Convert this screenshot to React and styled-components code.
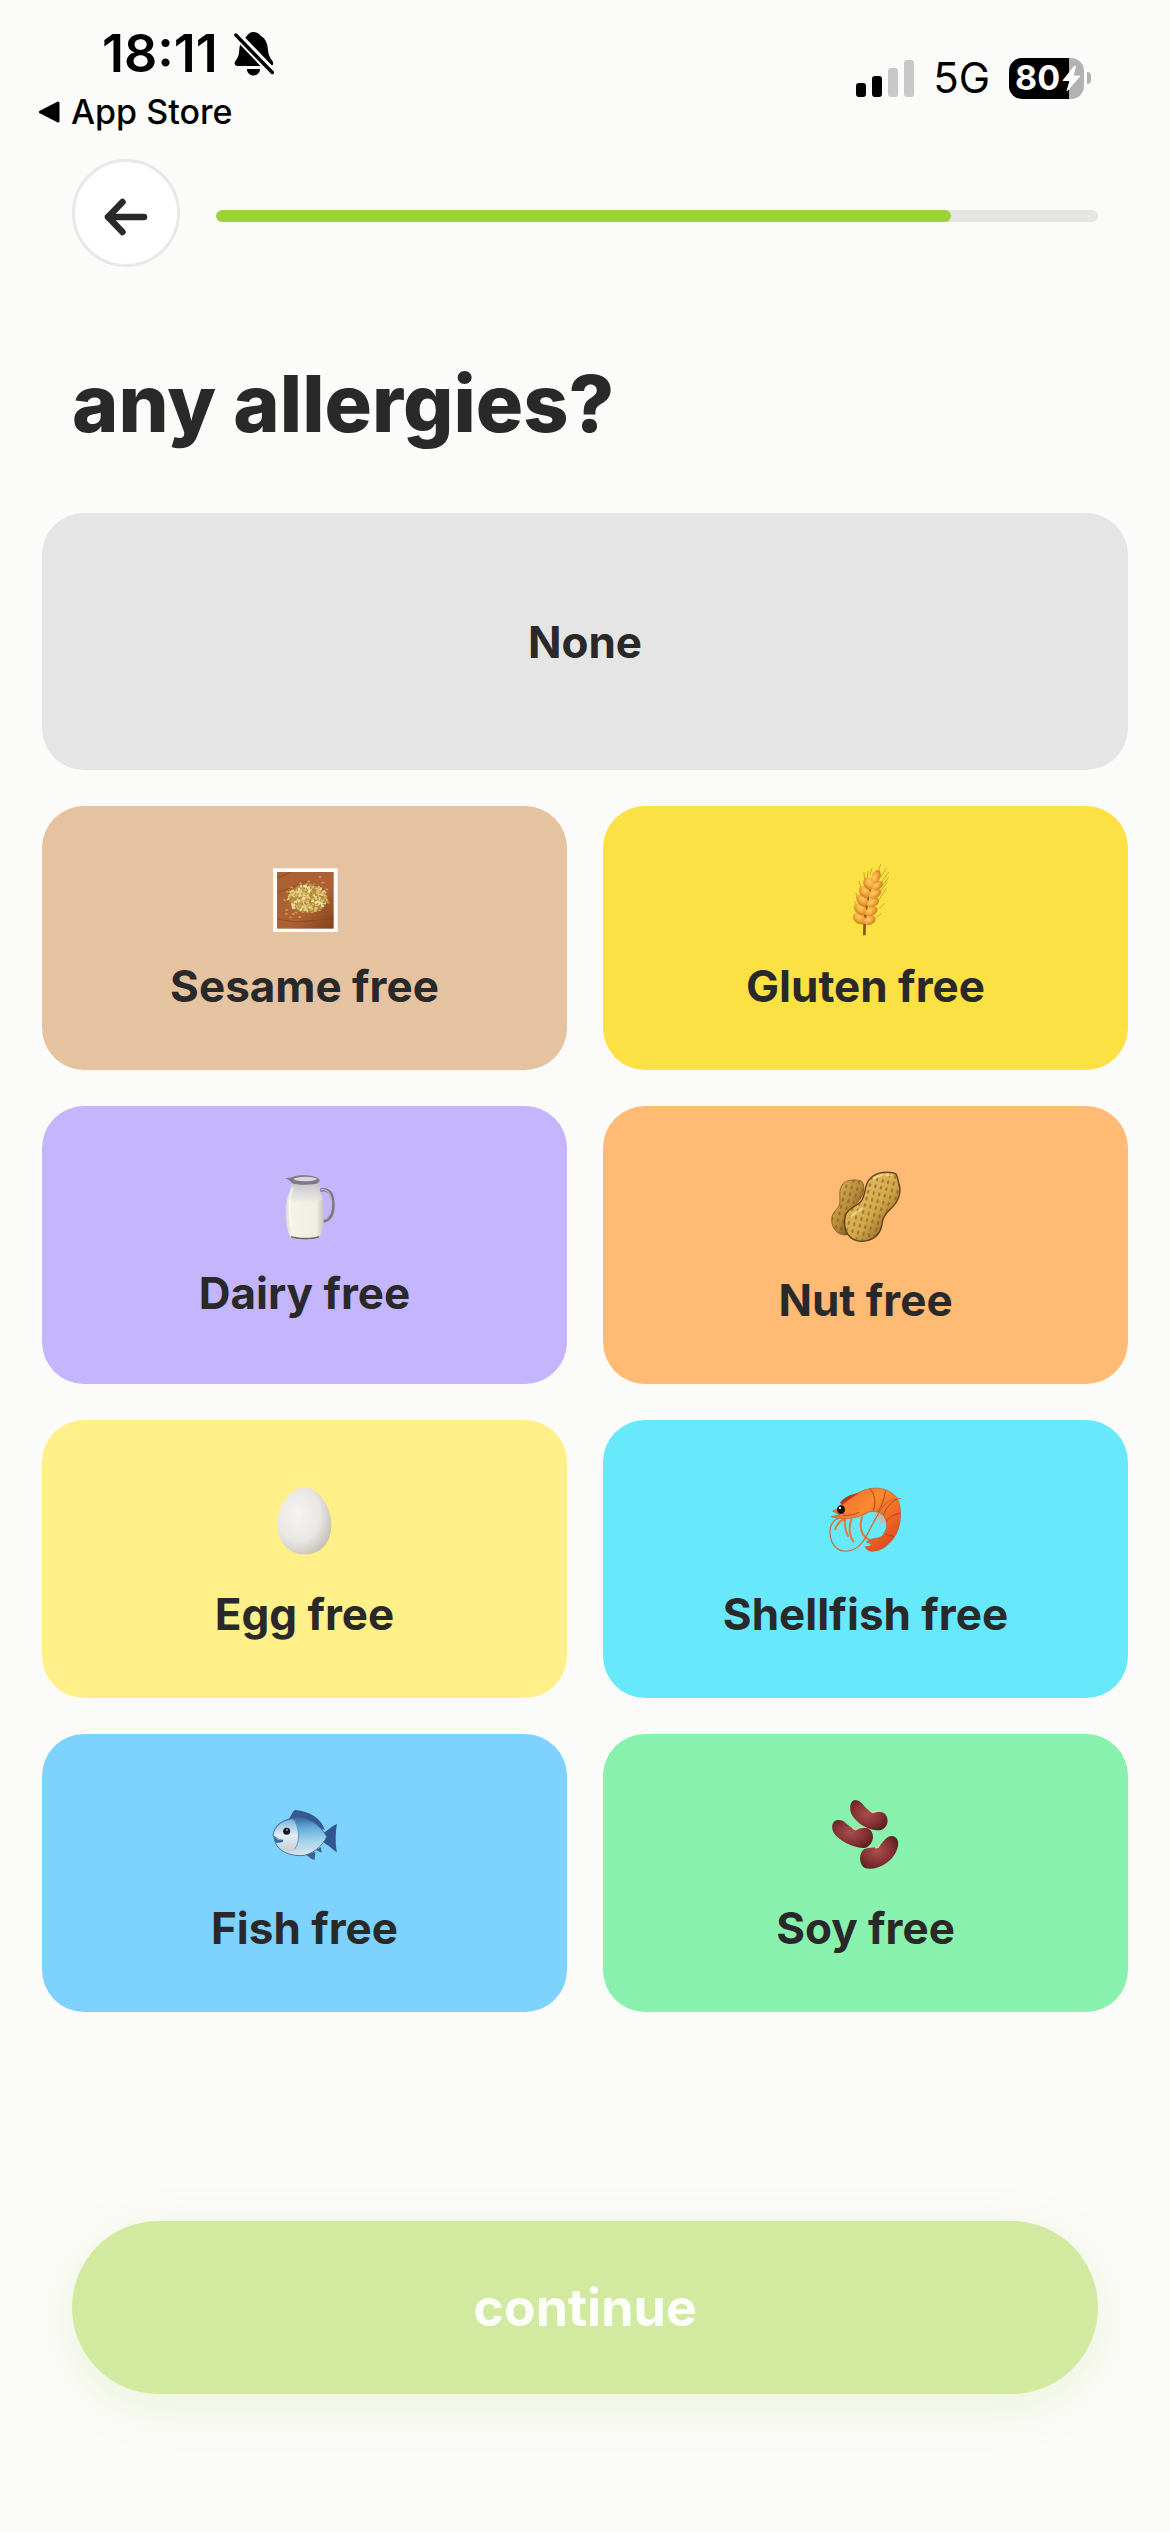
import React, { useState } from 'react';
import styled, { createGlobalStyle } from 'styled-components';

const GlobalStyle = createGlobalStyle`
  * {
    box-sizing: border-box;
  }
  body {
    margin: 0;
    background: #fbfbf9;
    color: #292929;
    font-family: Inter, 'Liberation Sans', sans-serif;
  }
  button {
    font-family: inherit;
    color: inherit;
    border: none;
    padding: 0;
    cursor: pointer;
  }
`;

const Page = styled.div`
  display: flex;
  flex-direction: column;
  min-height: 100vh;
`;

const StatusBar = styled.div`
  display: flex;
  align-items: center;
  justify-content: space-between;
  padding: 24px 79px 0 38px;
  color: #000;
`;

const ClockRow = styled.div`
  display: flex;
  align-items: center;
  gap: 16px;
  padding-left: 64px;
  font-size: 52px;
  line-height: 60px;
  font-weight: 600;
`;

const StoreLink = styled.a`
  display: flex;
  align-items: center;
  gap: 10px;
  margin-top: 8px;
  color: inherit;
  text-decoration: none;
  font-size: 34px;
  line-height: 40px;
  font-weight: 500;
`;

const Indicators = styled.div`
  display: flex;
  align-items: center;
  gap: 19px;
  font-size: 42px;
  line-height: 48px;
`;

const SignalBars = styled.div`
  display: flex;
  align-items: flex-end;
  gap: 6px;
`;

const SignalBar = styled.span`
  width: 10px;
  height: ${(props) => props.$height}px;
  border-radius: 3px;
  background: ${(props) => (props.$on ? '#000' : '#c8c8c8')};
`;

const Battery = styled.div`
  display: flex;
  align-items: center;
  gap: 3px;
`;

const BatteryBody = styled.div`
  display: flex;
  align-items: center;
  gap: 2px;
  width: 75px;
  height: 41px;
  padding-left: 6px;
  border-radius: 13px;
  background: linear-gradient(to right, #000 80%, #b2b2b2 80%);
  color: #fff;
  font-size: 34px;
  font-weight: 700;
`;

const BatteryTip = styled.span`
  width: 4px;
  height: 12px;
  border-radius: 0 4px 4px 0;
  background: #b2b2b2;
`;

const Header = styled.header`
  display: flex;
  align-items: center;
  gap: 36px;
  min-height: 114px;
  margin-top: 27px;
  padding: 0 72px;
`;

const BackButton = styled.button`
  display: flex;
  align-items: center;
  justify-content: center;
  align-self: flex-start;
  flex: none;
  width: 108px;
  height: 108px;
  && {
    padding-top: 8px;
    border: 3px solid #e8e8e7;
  }
  border-radius: 50%;
  background: #fff;
`;

const Track = styled.div`
  flex: 1;
  height: 12px;
  border-radius: 6px;
  background: #e5e5e4;
  overflow: hidden;
`;

const TrackFill = styled.div`
  height: 100%;
  border-radius: 6px;
  background: #9bd235;
`;

const Title = styled.h1`
  margin: 82px 72px 62px;
  font-size: 79px;
  line-height: 96px;
  font-weight: 800;
`;

const Options = styled.div`
  display: grid;
  grid-template-columns: 1fr 1fr;
  gap: 36px;
  padding: 0 42px;
`;

const OptionCard = styled.button`
  display: flex;
  flex-direction: column;
  align-items: center;
  justify-content: center;
  gap: 23px;
  grid-column: ${(props) => (props.$wide ? '1 / -1' : 'auto')};
  border-radius: 42px;
  background: ${(props) => props.$color};
  font-size: 44px;
  line-height: 54px;
  font-weight: 700;
  && {
    padding: ${(props) => (props.$wide ? '102px 0 101px' : '58px 0 57px')};
  }
  svg {
    display: block;
  }
`;

const Footer = styled.footer`
  margin-top: auto;
  padding: 72px 72px 138px;
`;

const ContinueButton = styled.button`
  display: block;
  width: 100%;
  height: 173px;
  border-radius: 87px;
  background: #d2e9a0;
  box-shadow: 0 12px 48px rgba(155, 210, 53, 0.16);
  && {
    color: #fcfef9;
  }
  font-size: 52px;
  line-height: 64px;
  font-weight: 700;
`;

const BellOff = () => (
  <svg width="40" height="44" viewBox="0 0 40 44" aria-hidden="true">
    <path
      d="M12 5C14 2 16 0 19.500 0S25 2 27 4C32 7 33.500 12 34 18C34.400 23 36 26 38.500 29C40 32 39 34 36 34H4C1 34 0 32 1 29.500C4 26 5 23 5.300 18C5.600 12 8 7 12 5Z"
      fill="#000"
    />
    <path d="M13 37H26C26 41 23 43.500 19.500 43.500S13 41 13 37Z" fill="#000" />
    <path d="M0 0L40 42" stroke="#fbfbf9" strokeWidth="8.500" />
    <path d="M1.800 3L38.300 40.500" stroke="#000" strokeWidth="3.400" strokeLinecap="round" />
  </svg>
);

const Bolt = () => (
  <svg width="19" height="27" viewBox="0 0 19 27" aria-hidden="true">
    <path d="M12.500 1L1 15.500H8L5 26L18 11H11L13.500 1.500Z" fill="#fff" stroke="#fff" strokeLinejoin="round" />
  </svg>
);

// uneven steps keep the heap of seeds from showing a spiral
const seeds = Array.from({ length: 260 }, (_, i) => {
  const angle = i * 2.4 + Math.sin(i * 12.9) * 0.5;
  const r = Math.sqrt(i / 260) + Math.sin(i * 7.3) * 0.05;
  return {
    x: 201 + Math.cos(angle) * r * 58,
    y: 174 + Math.sin(angle) * r * 41,
    turn: (i * 47) % 180,
    fill: ['#e6cf85', '#c9a04c', '#f3e3a8', '#b28a3e', '#dcbb66'][i % 5],
  };
});

const strays = [
  [140, 156], [152, 142], [180, 130], [204, 124], [238, 111], [246, 128],
  [259, 148], [132, 180], [138, 210], [137, 222], [150, 232], [166, 218],
  [177, 231], [186, 216], [214, 217], [236, 211], [262, 187], [158, 222],
];

const Sesame = () => (
  <svg width="72" height="72" viewBox="85 72 216 216" aria-hidden="true">
    <defs>
      <linearGradient id="wood" x1="0" y1="0" x2="1" y2="1">
        <stop offset="0" stopColor="#a96232" />
        <stop offset="0.6" stopColor="#ae6034" />
        <stop offset="1" stopColor="#84401d" />
      </linearGradient>
    </defs>
    <rect x="97" y="85" width="194" height="191" fill="#fff" />
    <rect x="109" y="96" width="170" height="170" fill="url(#wood)" />
    <path d="M109 114L150 97M109 160L200 122M109 238L170 246L278 236" stroke="#85431f" strokeWidth="2" fill="none" />
    <ellipse cx="202" cy="177" rx="58" ry="42" fill="#a67c36" />
    {seeds.map((s, i) => (
      <ellipse key={i} cx={s.x} cy={s.y} rx="5" ry="3" fill={s.fill} transform={`rotate(${s.turn} ${s.x} ${s.y})`} />
    ))}
    {strays.map(([x, y]) => (
      <ellipse key={`${x}-${y}`} cx={x} cy={y} rx="5.500" ry="3.500" fill="#d79a55" stroke="#87501f" />
    ))}
  </svg>
);

const grains = [
  [176, 236, 22, 15, 35], [207, 241, 19, 13, -25],
  [179, 208, 22, 15, 42], [212, 214, 20, 13, -28],
  [185, 181, 21, 15, 48], [217, 187, 20, 13, -30],
  [192, 156, 20, 15, 52], [223, 161, 20, 13, -30],
  [204, 131, 20, 15, 62], [230, 136, 18, 12, -32],
  [226, 110, 21, 13, -68],
];

const Wheat = () => (
  <svg width="72" height="72" viewBox="88 72 216 216" aria-hidden="true">
    <defs>
      <radialGradient id="grain" cx="0.4" cy="0.35" r="0.8">
        <stop offset="0" stopColor="#ffcf68" />
        <stop offset="0.5" stopColor="#f0a236" />
        <stop offset="1" stopColor="#bd681a" />
      </radialGradient>
    </defs>
    <path d="M191 286C190 240 196 190 214 120" stroke="#8a5312" strokeWidth="8" fill="none" />
    <path
      d="M233 96L240 72M240 112L258 84M240 130L264 96M238 146L264 112M236 160L260 124M236 178L256 146M236 205L252 190M228 232L242 220M192 124L190 98M200 112L202 92M208 106L214 84M182 148L175 122M170 180L166 158M165 208L163 184"
      stroke="#b98722"
      strokeWidth="2"
      fill="none"
    />
    {grains.map(([x, y, rx, ry, turn]) => (
      <ellipse key={`${x}-${y}`} cx={x} cy={y} rx={rx} ry={ry} fill="url(#grain)" transform={`rotate(${turn} ${x} ${y})`} />
    ))}
  </svg>
);

const Milk = () => (
  <svg width="72" height="72" viewBox="85 63 216 216" aria-hidden="true">
    <defs>
      <linearGradient id="glass" x1="0" y1="0" x2="1" y2="0">
        <stop offset="0" stopColor="#d9d8cf" />
        <stop offset="0.15" stopColor="#f4f3e8" />
        <stop offset="0.8" stopColor="#efeee3" />
        <stop offset="1" stopColor="#c4c2ba" />
      </linearGradient>
      <linearGradient id="neck" x1="0" y1="0" x2="0" y2="1">
        <stop offset="0" stopColor="#b3b1c0" />
        <stop offset="1" stopColor="#eeedeb" />
      </linearGradient>
    </defs>
    <path d="M236 122C262 112 276 130 277 160C278 190 270 208 251 213" fill="none" stroke="#7b7885" strokeWidth="10" strokeLinecap="round" />
    <path d="M240 120C260 114 272 132 273 160C274 186 266 202 252 209" fill="none" stroke="#b9b6c4" strokeWidth="4" />
    <path d="M152 98C152 122 135 140 135 182C135 218 140 246 150 262C164 272 222 272 237 262C246 244 251 216 250 180C249 144 235 124 236 98Z" fill="url(#glass)" />
    <path d="M152 96C152 118 142 132 138 152C170 162 224 158 246 148C242 132 235 118 236 96Z" fill="url(#neck)" opacity="0.7" />
    <path d="M151 262C164 271 222 271 236 262L235 257C220 265 168 265 152 257Z" fill="#6a6669" />
    <path d="M133 84C143 84 150 83 158 80C180 72 226 76 236 88C238 97 232 102 218 103C190 106 160 104 153 98C148 92 142 88 133 84Z" fill="#7d7a85" />
    <path d="M157 87C176 78 216 79 230 87C218 95 172 97 157 87Z" fill="#d7d5e0" />
    <path d="M156 114C145 140 145 188 151 228" stroke="#fff" strokeWidth="6" opacity="0.6" fill="none" strokeLinecap="round" />
  </svg>
);

const Peanuts = () => (
  <svg width="86" height="86" viewBox="67 42 258 258" aria-hidden="true">
    <defs>
      <linearGradient id="shell" x1="0" y1="0" x2="1" y2="1">
        <stop offset="0" stopColor="#ecca6e" />
        <stop offset="0.55" stopColor="#d3a84b" />
        <stop offset="1" stopColor="#6b4416" />
      </linearGradient>
      <linearGradient id="shellBack" x1="0" y1="0" x2="1" y2="1">
        <stop offset="0" stopColor="#dcb860" />
        <stop offset="0.5" stopColor="#b98b3a" />
        <stop offset="1" stopColor="#4a2d0e" />
      </linearGradient>
      <pattern id="pits" width="17" height="21" patternUnits="userSpaceOnUse" patternTransform="rotate(14)">
        <rect x="3" y="4" width="6" height="11" rx="2" fill="#8a5a1e" opacity="0.7" />
      </pattern>
      <path id="backNut" d="M180 92C192 98 192 124 182 142C172 158 160 166 156 186C154 212 164 246 140 254C114 260 92 236 93 208C94 184 112 180 117 162C120 144 112 122 126 102C140 88 162 88 180 92Z" />
      <path id="frontNut" d="M286 72C292 82 290 86 294 98C304 124 294 156 270 176C250 194 246 206 243 228C236 262 202 280 168 272C138 264 126 232 134 198C142 170 170 172 184 150C196 130 190 108 206 88C226 66 254 64 276 68Z" />
    </defs>
    <use href="#backNut" fill="url(#shellBack)" stroke="#6d4618" strokeWidth="2" />
    <use href="#backNut" fill="url(#pits)" />
    <use href="#frontNut" fill="url(#shell)" stroke="#5c3a12" strokeWidth="4" />
    <use href="#frontNut" fill="url(#pits)" />
    <path d="M220 86C236 74 256 72 272 76M150 200C158 190 172 186 184 176" stroke="#f9e9a0" strokeWidth="7" strokeLinecap="round" fill="none" opacity="0.6" />
  </svg>
);

const Egg = () => (
  <svg width="86" height="86" viewBox="64 54 258 258" aria-hidden="true">
    <defs>
      <radialGradient id="egg" cx="0.38" cy="0.4" r="0.68">
        <stop offset="0" stopColor="#f5f4f3" />
        <stop offset="0.6" stopColor="#e9e7e4" />
        <stop offset="1" stopColor="#c5bfb6" />
      </radialGradient>
    </defs>
    <path d="M191 82C234 82 272 142 272 194C272 250 238 283 191 283C146 283 110 248 110 194C110 142 148 82 191 82Z" fill="url(#egg)" />
  </svg>
);

const Shrimp = () => (
  <svg width="86" height="86" viewBox="67 54 258 258" aria-hidden="true">
    <defs>
      <linearGradient id="prawn" x1="0" y1="0" x2="1" y2="1">
        <stop offset="0" stopColor="#ee5f28" />
        <stop offset="0.4" stopColor="#fb8a30" />
        <stop offset="1" stopColor="#d93a18" />
      </linearGradient>
    </defs>
    <path d="M134 178C130 198 134 214 142 228M152 178C144 204 146 228 158 244M184 172C174 204 184 228 204 238M132 176C118 182 108 194 104 208" fill="none" stroke="#e07a35" strokeWidth="6" strokeLinecap="round" />
    <path d="M222 158L232 172L226 182M232 164L244 180L238 190M240 168L256 178M244 184L258 186" fill="none" stroke="#d3b3a6" strokeWidth="6" strokeLinecap="round" />
    <path
      d="M96 153L112 146C124 128 146 108 170 100C214 74 268 82 290 116C306 148 300 202 284 226C272 248 246 272 222 273C206 276 196 268 194 260C214 260 220 252 198 246C216 230 236 240 248 224C262 204 260 184 250 170C240 158 222 150 204 156C176 174 134 182 92 170L118 165Z"
      fill="url(#prawn)"
      stroke="#c94a1a"
      strokeWidth="2"
    />
    <path d="M118 128C130 112 150 102 176 100C160 108 140 122 126 134Z" fill="#b8381b" />
    <path d="M208 86C224 104 226 130 218 152M254 92C252 116 242 140 232 156M290 116C270 126 256 144 248 166M299 160C284 162 266 170 258 184M280 230C270 228 260 224 252 222" fill="none" stroke="#b9421b" strokeWidth="3" />
    <path d="M126 166C146 168 164 164 176 156" stroke="#b9421b" strokeWidth="3" fill="none" />
    <path d="M112 176C84 186 84 222 94 246C112 286 160 280 186 246C208 214 222 170 252 134C266 118 280 114 299 116" fill="none" stroke="#ce6631" strokeWidth="3.500" strokeLinecap="round" />
    <ellipse cx="121" cy="149" rx="12" ry="13" fill="#160b0b" />
    <circle cx="118" cy="144" r="3.500" fill="#fff" />
  </svg>
);

const Fish = () => (
  <svg width="86" height="86" viewBox="64 36 258 258" aria-hidden="true">
    <defs>
      <linearGradient id="scales" x1="0.3" y1="0" x2="0.4" y2="1">
        <stop offset="0" stopColor="#38699f" />
        <stop offset="0.3" stopColor="#64abdc" />
        <stop offset="0.65" stopColor="#a4d4ed" />
        <stop offset="1" stopColor="#dce4ec" />
      </linearGradient>
      <linearGradient id="face" x1="0" y1="0" x2="0" y2="1">
        <stop offset="0" stopColor="#7ab5dc" />
        <stop offset="0.5" stopColor="#e4edf4" />
        <stop offset="1" stopColor="#c8ccd7" />
      </linearGradient>
    </defs>
    <path d="M144 116C154 106 154 94 164 90C206 94 242 114 252 150L196 136Z" fill="#36598f" />
    <path d="M244 160C264 152 274 136 289 132C284 158 284 194 289 217C276 210 264 194 244 186Z" fill="#2f578e" />
    <path d="M190 222C202 226 210 238 222 240L224 216ZM226 210L243 218L241 202Z" fill="#3d608f" />
    <path d="M97 168C98 136 130 114 170 114C212 114 242 140 258 170C246 198 212 228 178 227C146 226 114 214 104 188L124 187C128 184 126 178 116 178Z" fill="url(#scales)" stroke="#4472a2" strokeWidth="3" />
    <path d="M99 166C104 136 128 120 158 118C174 138 180 176 162 214C138 214 114 206 107 190L124 187C128 184 126 178 116 178Z" fill="url(#face)" />
    <path d="M158 118C176 142 180 182 162 208" stroke="#6895bb" strokeWidth="3" fill="none" />
    <path d="M98 169L112 180L128 179L126 186L102 186" fill="#326aa3" />
    <circle cx="138" cy="154" r="10.500" fill="#11151c" />
    <circle cx="139" cy="150" r="3" fill="#929baa" />
  </svg>
);

const Beans = () => (
  <svg width="86" height="86" viewBox="67 36 258 258" aria-hidden="true">
    <defs>
      <radialGradient id="bean" cx="0.45" cy="0.45" r="0.6">
        <stop offset="0" stopColor="#a6504d" />
        <stop offset="0.6" stopColor="#883236" />
        <stop offset="1" stopColor="#5e2023" />
      </radialGradient>
    </defs>
    <path d="M163 60C186 60 190 86 210 94C226 98 234 94 248 98C266 108 266 140 242 150C210 156 170 132 154 106C144 86 148 62 163 60Z" fill="url(#bean)" />
    <path d="M111 120C134 118 140 140 160 146C176 148 186 142 202 145C224 156 222 192 196 203C164 208 116 184 100 160C90 142 94 122 111 120Z" fill="url(#bean)" />
    <path d="M276 168C260 166 252 180 238 196C226 206 208 200 190 208C174 220 174 252 192 264C224 274 270 250 286 216C298 192 294 172 276 168Z" fill="url(#bean)" />
    <path d="M207 91L216 97L227 94M155 143L164 149L174 145M223 203L232 202L237 194" stroke="#efd3a0" strokeWidth="5" fill="none" />
  </svg>
);

const options = [
  { name: 'None', color: '#e5e5e5', wide: true },
  { name: 'Sesame free', color: '#e6c3a0', Icon: Sesame },
  { name: 'Gluten free', color: '#fce144', Icon: Wheat },
  { name: 'Dairy free', color: '#c4b5fd', Icon: Milk },
  { name: 'Nut free', color: '#ffba74', Icon: Peanuts },
  { name: 'Egg free', color: '#fff08a', Icon: Egg },
  { name: 'Shellfish free', color: '#67e8fb', Icon: Shrimp },
  { name: 'Fish free', color: '#7dd3fe', Icon: Fish },
  { name: 'Soy free', color: '#88f1ad', Icon: Beans },
];

const signal = [14, 21, 29, 37];
const step = 5;
const steps = 6;

export default function App() {
  const [selected, setSelected] = useState([]);

  const toggle = (name) => {
    if (selected.includes(name)) {
      setSelected(selected.filter((item) => item !== name));
      return;
    }
    setSelected([...selected, name]);
  };

  return (
    <>
      <GlobalStyle />
      <Page>
        <StatusBar>
          <div>
            <ClockRow>
              <span>18:11</span>
              <BellOff />
            </ClockRow>
            <StoreLink href="#store">
              <svg width="23" height="22" viewBox="0 0 23 22" aria-hidden="true">
                <path d="M20 2L2.500 11L20 20Z" fill="#000" stroke="#000" strokeWidth="3" strokeLinejoin="round" />
              </svg>
              App Store
            </StoreLink>
          </div>
          <Indicators>
            <SignalBars>
              {signal.map((height, i) => (
                <SignalBar key={height} $height={height} $on={i < 2} />
              ))}
            </SignalBars>
            <span>5G</span>
            <Battery>
              <BatteryBody>
                80
                <Bolt />
              </BatteryBody>
              <BatteryTip />
            </Battery>
          </Indicators>
        </StatusBar>
        <Header>
          <BackButton type="button" aria-label="Back">
            <svg width="44" height="38" viewBox="0 0 44 38" fill="none" aria-hidden="true">
              <path d="M40 19H4M18.500 4L4 19L18.500 34" stroke="#292929" strokeWidth="6.500" strokeLinecap="round" strokeLinejoin="round" />
            </svg>
          </BackButton>
          <Track role="progressbar" aria-label="Progress" aria-valuenow={step} aria-valuemin={0} aria-valuemax={steps}>
            <TrackFill style={{ width: `${(step / steps) * 100}%` }} />
          </Track>
        </Header>
        <Title>any allergies?</Title>
        <Options>
          {options.map(({ name, color, wide, Icon }) => (
            <OptionCard
              key={name}
              type="button"
              $color={color}
              $wide={wide}
              aria-pressed={selected.includes(name)}
              onClick={() => toggle(name)}
            >
              {Icon && <Icon />}
              <span>{name}</span>
            </OptionCard>
          ))}
        </Options>
        <Footer>
          <ContinueButton type="button">continue</ContinueButton>
        </Footer>
      </Page>
    </>
  );
}
